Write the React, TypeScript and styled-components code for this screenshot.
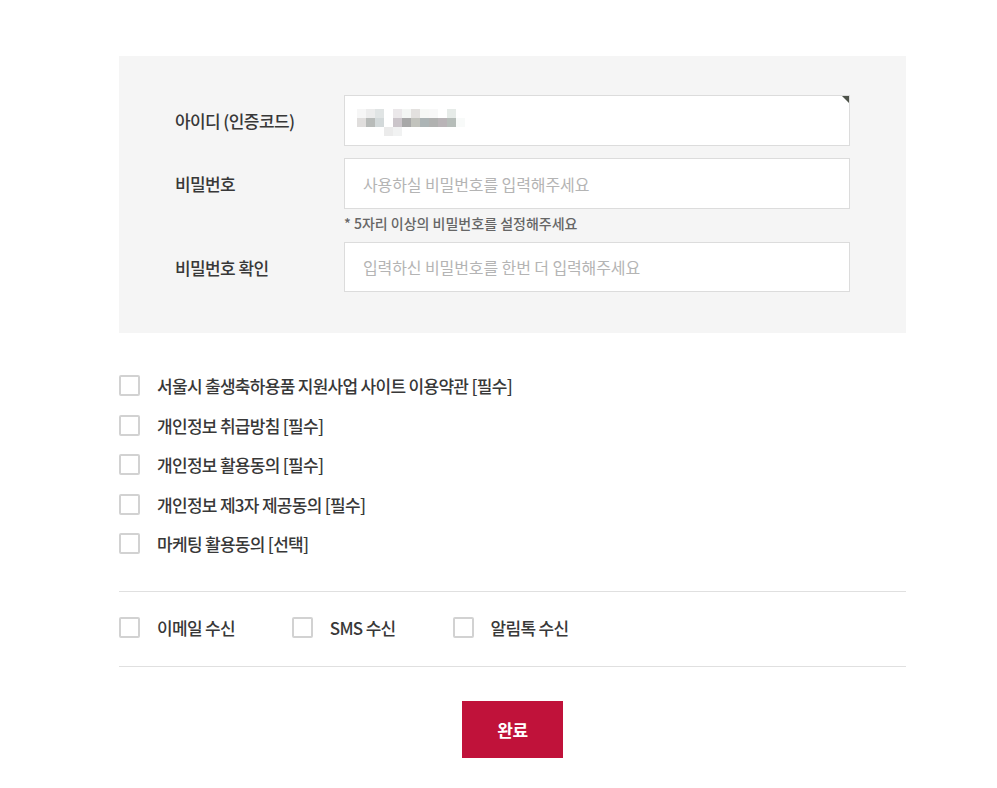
import React from 'react';
import styled, { createGlobalStyle } from 'styled-components';

const GlobalStyle = createGlobalStyle`
  html, body {
    margin: 0;
    padding: 0;
    background: #fff;
  }
  body {
    font-family: 'Noto Sans CJK KR', 'Noto Sans', sans-serif;
    color: #333;
  }
  * {
    box-sizing: border-box;
  }
`;

const Page = styled.div`
  width: 787px;
  margin: 56px 0 0 119px;
  padding-bottom: 30px;
`;

const FormBox = styled.div`
  background: #f5f5f5;
  padding: 39px 56px 41px 56px;
`;

const FieldRow = styled.div<{ $mt?: number }>`
  display: flex;
  align-items: center;
  margin-top: ${(p) => p.$mt ?? 0}px;
`;

const Label = styled.label`
  width: 169px;
  flex-shrink: 0;
  font-size: 17px;
  font-weight: 500;
  letter-spacing: -0.6px;
  color: #383838;
`;

const InputWrap = styled.div`
  position: relative;
  flex: 1;
`;

const TextInput = styled.input<{ $h?: number }>`
  display: block;
  width: 100%;
  height: ${(p) => p.$h ?? 51}px;
  border: 1px solid #dcdcdc;
  background: #fff;
  padding: 0 18px;
  font-family: inherit;
  font-size: 16px;
  letter-spacing: -0.1px;
  color: #333;
  outline: none;

  &::placeholder {
    color: #b4b4b4;
  }
`;

const Corner = styled.span`
  position: absolute;
  top: 1px;
  right: 1px;
  width: 0;
  height: 0;
  border-top: 7px solid #4d5249;
  border-left: 7px solid transparent;
`;

const Mosaic = styled.svg`
  position: absolute;
  left: 13px;
  top: 14px;
`;

const Hint = styled.p`
  margin: 4px 0 0 169px;
  height: 22px;
  font-size: 14px;
  font-weight: 500;
  letter-spacing: 0;
  color: #666;
`;

const AgreeList = styled.div`
  margin-top: 33px;
  margin-bottom: 27px;
`;

const CheckRow = styled.label`
  display: flex;
  align-items: center;
  height: 39.5px;
  cursor: pointer;
`;

const Box = styled.span`
  width: 21px;
  height: 21px;
  flex-shrink: 0;
  border: 2px solid #d2d2d2;
  border-radius: 2px;
  background: #fff;
  margin-right: 17px;
`;

const CheckText = styled.span`
  font-size: 17px;
  font-weight: 500;
  letter-spacing: -0.7px;
  color: #383838;
`;

const ReceiveRow = styled.div`
  display: flex;
  align-items: center;
  gap: 57px;
  border-top: 1px solid #e0e0e0;
  border-bottom: 1px solid #e0e0e0;
  padding: 16px 0 18px;
`;

const ReceiveItem = styled.label`
  display: flex;
  align-items: center;
  height: 40px;
`;

const ButtonRow = styled.div`
  display: flex;
  justify-content: center;
  margin-top: 34px;
`;

const SubmitButton = styled.button`
  width: 101px;
  height: 57px;
  border: none;
  background: #c0123a;
  color: #fff;
  font-family: inherit;
  font-size: 17px;
  font-weight: 700;
  letter-spacing: -0.5px;
  cursor: pointer;
`;

const mosaicCells: [number, number, string][] = [
  [0, 0, '#f6f6f6'], [1, 0, '#ececec'], [2, 0, '#e0e4e4'], [4, 0, '#ebe8ea'],
  [5, 0, '#f4f6f4'], [6, 0, '#e3e1df'], [7, 0, '#f6f8f6'], [8, 0, '#f8f8f8'],
  [10, 0, '#e6ebe8'],
  [0, 1, '#e0dedd'], [1, 1, '#b8bbb9'], [2, 1, '#d3d9da'], [4, 1, '#cbc5ca'],
  [5, 1, '#a8a8a8'], [6, 1, '#c2c3bd'], [7, 1, '#acb4b5'], [8, 1, '#b0b1b0'],
  [9, 1, '#b9b4b7'], [10, 1, '#b6bdb9'], [11, 1, '#f8faf9'],
  [3, 2, '#ebebeb'], [4, 2, '#f1f2f2'],
];

const agreements = [
  '서울시 출생축하용품 지원사업 사이트 이용약관 [필수]',
  '개인정보 취급방침 [필수]',
  '개인정보 활용동의 [필수]',
  '개인정보 제3자 제공동의 [필수]',
  '마케팅 활용동의 [선택]',
];

const receives = ['이메일 수신', 'SMS 수신', '알림톡 수신'];

const App: React.FC = () => {
  return (
    <Page>
      <GlobalStyle />
      <FormBox>
        <FieldRow>
          <Label>아이디 (인증코드)</Label>
          <InputWrap>
            <TextInput readOnly aria-label="아이디" />
            <Mosaic width="108" height="27" viewBox="0 0 108 27">
              {mosaicCells.map(([cx, cy, fill]) => (
                <rect key={`${cx}-${cy}`} x={cx * 9} y={cy * 9} width="9" height="9" fill={fill} />
              ))}
            </Mosaic>
            <Corner />
          </InputWrap>
        </FieldRow>
        <FieldRow $mt={12}>
          <Label>비밀번호</Label>
          <InputWrap>
            <TextInput type="password" placeholder="사용하실 비밀번호를 입력해주세요" />
          </InputWrap>
        </FieldRow>
        <Hint>* 5자리 이상의 비밀번호를 설정해주세요</Hint>
        <FieldRow $mt={7}>
          <Label>비밀번호 확인</Label>
          <InputWrap>
            <TextInput $h={50} type="password" placeholder="입력하신 비밀번호를 한번 더 입력해주세요" />
          </InputWrap>
        </FieldRow>
      </FormBox>

      <AgreeList>
        {agreements.map((text) => (
          <CheckRow key={text}>
            <Box />
            <CheckText>{text}</CheckText>
          </CheckRow>
        ))}
      </AgreeList>

      <ReceiveRow>
        {receives.map((text) => (
          <ReceiveItem key={text}>
            <Box />
            <CheckText>{text}</CheckText>
          </ReceiveItem>
        ))}
      </ReceiveRow>

      <ButtonRow>
        <SubmitButton>완료</SubmitButton>
      </ButtonRow>
    </Page>
  );
};

export default App;
